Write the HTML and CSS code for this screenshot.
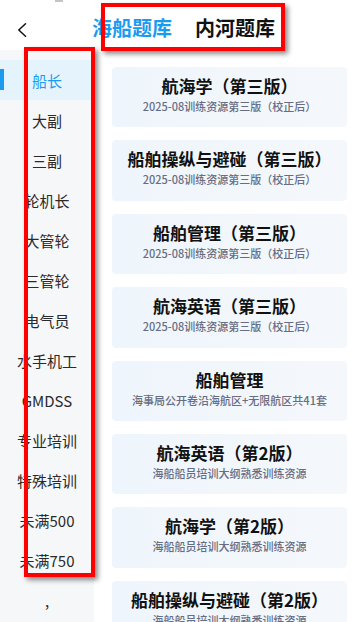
FILE: index.html
```html
<!DOCTYPE html>
<html lang="zh-CN">
<head>
<meta charset="utf-8">
<meta name="viewport" content="width=360">
<link rel="stylesheet" href="styles.css">
</head>
<body>
<div class="app">
  <div class="notch"></div>
  <header class="topbar">
    <svg class="back" viewBox="0 0 10 14" width="10" height="14" aria-hidden="true">
      <path d="M8.5 0.8 L1.8 7 L8.5 13.2" fill="none" stroke="#111" stroke-width="1.5" stroke-linecap="round" stroke-linejoin="round"/>
    </svg>
    <nav class="tabs">
      <div class="tab active">海船题库</div>
      <div class="tab">内河题库</div>
    </nav>
  </header>
  <div class="content">
    <aside class="sidebar">
      <div class="side-item active">船长</div>
      <div class="side-item">大副</div>
      <div class="side-item">三副</div>
      <div class="side-item">轮机长</div>
      <div class="side-item">大管轮</div>
      <div class="side-item">三管轮</div>
      <div class="side-item">电气员</div>
      <div class="side-item">水手机工</div>
      <div class="side-item">GMDSS</div>
      <div class="side-item">专业培训</div>
      <div class="side-item">特殊培训</div>
      <div class="side-item">未满500</div>
      <div class="side-item">未满750</div>
      <div class="side-item">,</div>
    </aside>
    <main class="list">
      <div class="card"><div class="card-title">航海学（第三版）</div><div class="card-sub">2025-08训练资源第三版（校正后）</div></div>
      <div class="card"><div class="card-title">船舶操纵与避碰（第三版）</div><div class="card-sub">2025-08训练资源第三版（校正后）</div></div>
      <div class="card"><div class="card-title">船舶管理（第三版）</div><div class="card-sub">2025-08训练资源第三版（校正后）</div></div>
      <div class="card"><div class="card-title">航海英语（第三版）</div><div class="card-sub">2025-08训练资源第三版（校正后）</div></div>
      <div class="card"><div class="card-title">船舶管理</div><div class="card-sub">海事局公开卷沿海航区+无限航区共41套</div></div>
      <div class="card"><div class="card-title">航海英语（第2版）</div><div class="card-sub">海船船员培训大纲熟悉训练资源</div></div>
      <div class="card"><div class="card-title">航海学（第2版）</div><div class="card-sub">海船船员培训大纲熟悉训练资源</div></div>
      <div class="card"><div class="card-title">船舶操纵与避碰（第2版）</div><div class="card-sub">海船船员培训大纲熟悉训练资源</div></div>
    </main>
  </div>
  <div class="mark mark-tabs"></div>
  <div class="mark mark-side"></div>
</div>
</body>
</html>
```

FILE: styles.css
```css
* { box-sizing: border-box; }
html, body {
  margin: 0;
  padding: 0;
  background: #fff;
}
body {
  font-family: "Noto Sans CJK SC", "Noto Sans", sans-serif;
  color: #222;
}
.app {
  position: relative;
  width: 360px;
  height: 622px;
  overflow: hidden;
  background: #fff;
}
.notch {
  position: absolute;
  left: 55px;
  top: 0;
  width: 8px;
  height: 2px;
  background: #c4c4c4;
}
.topbar {
  height: 50px;
  display: flex;
  align-items: flex-start;
  padding: 14px 0 0 17px;
  background: #fff;
}
.back {
  margin-top: 9px;
  flex: none;
}
.tabs {
  display: flex;
  gap: 23px;
  margin-left: 65px;
}
.tab {
  display: flex;
  flex-direction: column;
  align-items: center;
  font-size: 20px;
  font-weight: 700;
  line-height: 28px;
  color: #111;
  white-space: nowrap;
}
.tab.active {
  color: #1b9bef;
}
.tab.active::after {
  content: "";
  display: block;
  width: 30px;
  height: 3px;
  margin-top: 5px;
  border-radius: 2px;
  background: #1b9bef;
}
.content {
  display: flex;
  height: 572px;
}
.sidebar {
  width: 94px;
  flex: none;
  background: #f6f7f9;
  padding-top: 10px;
}
.side-item {
  position: relative;
  height: 40px;
  display: flex;
  align-items: center;
  justify-content: center;
  font-size: 15px;
  color: #2a2a2a;
  white-space: nowrap;
}
.side-item.active {
  background: #e5f3fd;
  color: #1b9bef;
}
.side-item.active::before {
  content: "";
  position: absolute;
  left: 0;
  top: 9px;
  width: 4px;
  height: 21px;
  background: #1b9bef;
}
.list {
  flex: 1;
  padding: 17px 13px 0 18px;
  display: flex;
  flex-direction: column;
  gap: 13px;
}
.card {
  flex: none;
  height: 60.4px;
  border-radius: 4px;
  background: linear-gradient(90deg, #eef5fc 0%, #f5f8fb 100%);
  padding-top: 8px;
  display: flex;
  flex-direction: column;
  align-items: center;
}
.card-title {
  font-size: 17px;
  font-weight: 700;
  line-height: 22px;
  color: #111;
  white-space: nowrap;
}
.card-sub {
  font-size: 11px;
  font-weight: 500;
  line-height: 16px;
  margin-top: 1px;
  color: #666d84;
  white-space: nowrap;
}
.mark {
  position: absolute;
  border: 4px solid #ff0000;
  box-shadow: 3px 3px 5px rgba(0, 0, 0, 0.45);
  pointer-events: none;
}
.mark-tabs {
  left: 101px;
  top: 3px;
  width: 184px;
  height: 48px;
}
.mark-side {
  left: 24px;
  top: 47px;
  width: 71px;
  height: 530px;
}
```
